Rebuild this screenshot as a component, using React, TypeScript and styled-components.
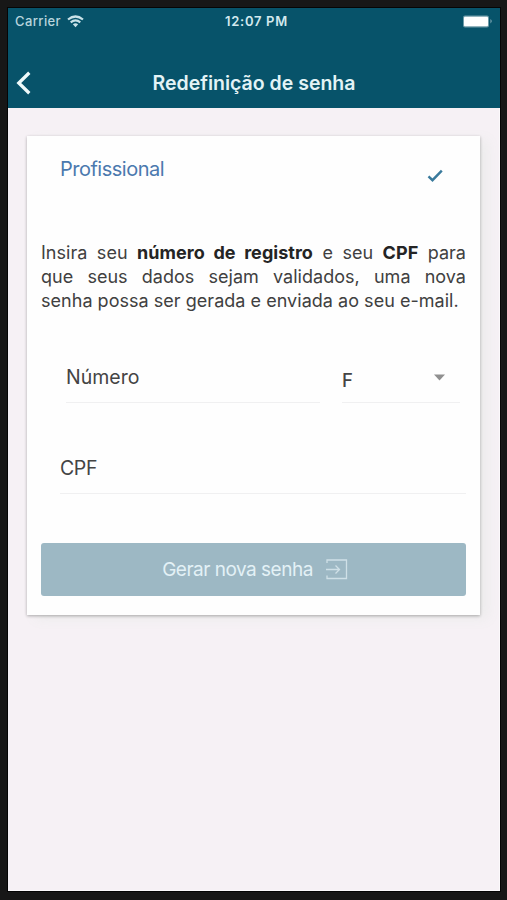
import React from "react";
import styled, { createGlobalStyle } from "styled-components";

const GlobalStyle = createGlobalStyle`
  *, *::before, *::after { box-sizing: border-box; }
  body { margin: 0; background: #171717; }
`;

const Bezel = styled.div`
  width: 507px;
  height: 900px;
  padding: 8px 7px 9px 8px;
  background: #171717;
  font-family: Inter, "Liberation Sans", sans-serif;
  overflow: hidden;
`;

const Screen = styled.main`
  width: 492px;
  height: 883px;
  background: #f6f1f5;
  border-right: 1px solid #fbf9fb;
  border-bottom: 1px solid #fbf9fb;
  box-shadow: 0 0 0 1px #050505;
`;

const Header = styled.header`
  height: 100px;
  margin-right: -1px;
  background: #07536a;
  color: #e3f3f6;
`;

const StatusBar = styled.div`
  display: grid;
  grid-template-columns: 1fr auto 1fr;
  align-items: center;
  height: 25px;
  padding: 1px 7px 0 7px;
  font-size: 12.5px;
  line-height: 16px;
`;

const Carrier = styled.span`
  display: flex;
  align-items: center;
  gap: 6px;
  color: #b9d5dd;
  font-size: 13px;
  font-weight: 500;
  letter-spacing: 0.4px;
`;

const Clock = styled.span`
  margin-left: 5px;
  font-size: 13px;
  font-weight: 600;
  letter-spacing: 0.7px;
  color: #d3e9ee;
`;

const Battery = styled.svg`
  justify-self: end;
  display: block;
`;

const TitleBar = styled.div`
  display: grid;
  grid-template-columns: 30px 1fr 30px;
  align-items: center;
  height: 50px;
  margin-top: 25px;
`;

const BackButton = styled.button`
  display: flex;
  width: 30px;
  height: 40px;
  padding: 8px 0 0 8px;
  border: 0;
  background: none;
`;

const Title = styled.h1`
  margin: 0;
  text-align: center;
  font-size: 19.5px;
  line-height: 24px;
  font-weight: 600;
  letter-spacing: 0;
`;

const Card = styled.section`
  width: 453px;
  height: 479px;
  margin: 28px 0 0 19px;
  padding: 20px 14px 0 14px;
  background: #fefefe;
  box-shadow: 0 1px 3px rgba(0, 0, 0, 0.3), 8px 4px 12px #ececec;
`;

const Profile = styled.div`
  display: flex;
  justify-content: space-between;
  height: 85px;
  padding: 0 23px 0 19px;
`;

const ProfileName = styled.span`
  font-size: 20px;
  line-height: 26px;
  letter-spacing: -0.5px;
  color: #4b79ae;
`;

const Check = styled.svg`
  margin-top: 13px;
`;

const Instructions = styled.p`
  width: 425px;
  margin: 0;
  font-size: 18px;
  line-height: 24px;
  letter-spacing: 0.03px;
  color: #404040;

  strong {
    font-weight: 700;
    color: #242424;
  }
`;

const Line = styled.span<{ $justified?: boolean }>`
  display: block;
  white-space: nowrap;
  text-align-last: ${({ $justified }) => ($justified ? "justify" : "left")};
`;

const FieldRow = styled.div`
  display: flex;
  gap: 22px;
  height: 53px;
  margin-top: 37px;
  padding: 0 6px 0 25px;
`;

const Field = styled.label<{ $width: number }>`
  display: flex;
  justify-content: space-between;
  width: ${({ $width }) => $width}px;
  height: 53px;
  padding-top: 14px;
  border-bottom: 1px solid #f0f0f1;
  font-size: 19.5px;
  line-height: 26px;
  color: #444;
`;

const Selected = styled.span`
  margin-top: 3px;
  font-size: 18.5px;
  font-weight: 500;
`;

const Caret = styled.svg`
  margin: 10px 15px 0 0;
`;

const CpfField = styled(Field)`
  margin: 38px 0 0 19px;
  letter-spacing: -0.4px;
`;

const SubmitButton = styled.button`
  display: flex;
  justify-content: center;
  align-items: center;
  gap: 12px;
  width: 425px;
  height: 53px;
  margin-top: 49px;
  padding: 0 0 0 3px;
  border: 0;
  border-radius: 3px;
  background: #9db8c4;
  color: #e3f1f6;
  font: 400 19px/26px Inter, "Liberation Sans", sans-serif;
  letter-spacing: -0.5px;
`;

const WifiIcon = () => (
  <svg width="17" height="13" viewBox="0 0 17 13" fill="none" stroke="#c9e2e8" strokeWidth="2.2">
    <path d="M1 4.5Q8.5-1.5 16 4.5M3.7 7.3Q8.5 3.5 13.3 7.3" />
    <path d="M5.8 9.3Q8.5 7.3 11.2 9.3L8.5 12.3Z" fill="#c9e2e8" stroke="none" />
  </svg>
);

const LoginIcon = () => (
  <svg width="23" height="21" viewBox="0 0 23 21" fill="none" stroke="#cfe0e7" strokeWidth="1.3">
    <path d="M2 4V1h19.5v18.5H2V16.5M1 10.5h13M10.5 6.5l4 4-4 4" />
  </svg>
);

export default function App() {
  return (
    <>
      <GlobalStyle />
      <Bezel>
        <Screen>
          <Header>
            <StatusBar>
              <Carrier>
                Carrier
                <WifiIcon />
              </Carrier>
              <Clock>12:07 PM</Clock>
              <Battery width="30" height="13" viewBox="0 0 30 13">
                <rect x="0" y="0.5" width="26" height="12" rx="2" fill="#6f9ba8" />
                <rect x="1" y="1.7" width="24" height="9.5" rx="1" fill="#fff" />
                <path d="M27.5 4q2.4 2.2 0 4.4z" fill="#8bb0bb" />
              </Battery>
            </StatusBar>
            <TitleBar>
              <BackButton aria-label="Voltar">
                <svg width="16" height="24" viewBox="0 0 16 24" fill="none" stroke="#eefafa" strokeWidth="3.3">
                  <path d="M13.3 1.7L2.8 12l10.5 10.3" />
                </svg>
              </BackButton>
              <Title>Redefinição de senha</Title>
            </TitleBar>
          </Header>
          <Card>
            <Profile>
              <ProfileName>Profissional</ProfileName>
              <Check width="16" height="14" viewBox="0 0 16 14" fill="none" stroke="#397a9c" strokeWidth="2.4">
                <path d="M1.5 7.3L5.5 11.2 14.8 1.7" />
              </Check>
            </Profile>
            <Instructions>
              <Line $justified>
                Insira seu <strong>número de registro</strong> e seu <strong>CPF</strong> para
              </Line>
              <Line $justified>que seus dados sejam validados, uma nova</Line>
              <Line>senha possa ser gerada e enviada ao seu e-mail.</Line>
            </Instructions>
            <FieldRow>
              <Field $width={254}>Número</Field>
              <Field $width={118}>
                <Selected>F</Selected>
                <Caret width="11" height="7" viewBox="0 0 11 7">
                  <path d="M0 0.5h11L5.5 6.5z" fill="#909090" />
                </Caret>
              </Field>
            </FieldRow>
            <CpfField $width={406}>CPF</CpfField>
            <SubmitButton>
              Gerar nova senha
              <LoginIcon />
            </SubmitButton>
          </Card>
        </Screen>
      </Bezel>
    </>
  );
}
